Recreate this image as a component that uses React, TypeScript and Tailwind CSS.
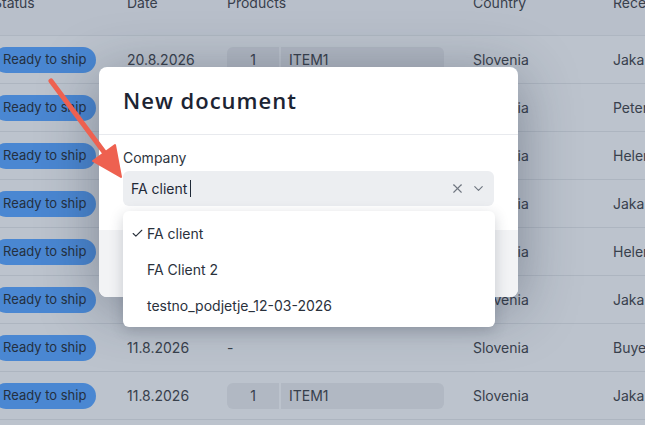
import { Check, ChevronDown, X } from "lucide-react";

type Order = {
  date: string;
  qty?: string;
  item?: string;
  country: string;
  receiver: string;
};

const orders: Order[] = [
  { date: "20.8.2026", qty: "1", item: "ITEM1", country: "Slovenia", receiver: "Jaka" },
  { date: "19.8.2026", qty: "1", item: "ITEM1", country: "Slovenia", receiver: "Peter" },
  { date: "18.8.2026", qty: "2", item: "ITEM2", country: "Slovenia", receiver: "Helena" },
  { date: "15.8.2026", qty: "1", item: "ITEM1", country: "Slovenia", receiver: "Jaka" },
  { date: "14.8.2026", qty: "1", item: "ITEM3", country: "Slovenia", receiver: "Helena" },
  { date: "12.8.2026", qty: "1", item: "ITEM1", country: "Slovenia", receiver: "Jaka" },
  { date: "11.8.2026", country: "Slovenia", receiver: "Buyer" },
  { date: "11.8.2026", qty: "1", item: "ITEM1", country: "Slovenia", receiver: "Jaka" },
];

const companies = ["FA client", "FA Client 2", "testno_podjetje_12-03-2026"];

const OrdersTable = () => (
  <div className="-mt-[7px] -ml-[7px] w-[700px] text-[14px] text-[#38404c]">
    <div className="flex h-[43px] items-start border-b border-[#aeb6c1] bg-[#b8bfca] leading-5">
      <div className="w-[134px]">Status</div>
      <div className="w-[100px]">Date</div>
      <div className="w-[246px]">Products</div>
      <div className="w-[140px]">Country</div>
      <div>Receiver</div>
    </div>
    {orders.map((o, i) => (
      <div key={i} className="flex h-12 items-center border-b border-[#adb5c0] bg-[#bcc3cd]">
        <div className="w-[134px]">
          <span className="inline-flex h-[26px] items-center rounded-full bg-[#4a87d2] px-[10px] text-[13px] text-[#24303f]">
            Ready to ship
          </span>
        </div>
        <div className="w-[100px]">{o.date}</div>
        <div className="flex w-[246px] gap-[2px]">
          {o.qty ? (
            <>
              <span className="flex h-[26px] w-[52px] items-center justify-center rounded-l-md bg-[#b1b8c3]">
                {o.qty}
              </span>
              <span className="flex h-[26px] w-[163px] items-center rounded-r-md bg-[#b1b8c3] px-2">
                {o.item}
              </span>
            </>
          ) : (
            <span>-</span>
          )}
        </div>
        <div className="w-[140px]">{o.country}</div>
        <div>{o.receiver}</div>
      </div>
    ))}
  </div>
);

const CompanySelect = () => (
  <div className="flex flex-col gap-[3px]">
    <label className="text-[14px] leading-5 text-[#2d3440]">Company</label>
    <div className="flex h-[35px] items-center rounded-md bg-[#eceef1] pl-2 pr-[8px]">
      <span className="text-[14px] text-[#1f2937]">FA client</span>
      <span className="ml-[3px] h-[17px] w-px bg-[#1f2937]" />
      <div className="ml-auto flex items-center gap-[6px] text-[#6f7680]">
        <X size={15} strokeWidth={1.8} />
        <ChevronDown size={15} strokeWidth={1.8} />
      </div>
    </div>
  </div>
);

const CompanyMenu = () => (
  <div className="absolute left-[123px] top-[211px] w-[372px] rounded-md bg-white py-1 shadow-[0_4px_14px_rgba(40,50,70,0.22)]">
    {companies.map((c, i) => (
      <div key={c} className="flex h-9 items-center text-[14px] text-[#2a313c]">
        <span className="flex w-6 justify-end pr-[3px]">
          {i === 0 && <Check size={13} strokeWidth={2} />}
        </span>
        <span>{c}</span>
      </div>
    ))}
  </div>
);

const PointerArrow = () => (
  <svg className="absolute left-0 top-0" width="200" height="200" viewBox="0 0 200 200">
    <line x1="51" y1="81" x2="107" y2="156" stroke="#ee6150" strokeWidth="5" strokeLinecap="round" />
    <polygon points="121,177 93,161 115,145" fill="#ee6150" stroke="#ee6150" strokeWidth="2" strokeLinejoin="round" />
  </svg>
);

export default function App() {
  return (
    <div className="relative h-[425px] w-[645px] overflow-hidden bg-[#bcc3cd] font-['Inter',sans-serif]">
      <OrdersTable />

      <div className="absolute left-[99px] top-[67px] flex h-[230px] w-[419px] flex-col rounded-lg bg-white shadow-[0_10px_60px_rgba(30,40,60,0.4)]">
        <div className="flex h-[68px] items-center border-b border-[#e8eaee] px-6">
          <h2 className="font-['Open_Sans',sans-serif] text-[22px] font-semibold tracking-[1px] text-[#1c2433]">
            New document
          </h2>
        </div>
        <div className="px-6 pb-6 pt-[13px]">
          <CompanySelect />
        </div>
        <div className="flex-1 rounded-b-lg bg-[#f2f3f5]" />
      </div>

      <CompanyMenu />
      <PointerArrow />
    </div>
  );
}
